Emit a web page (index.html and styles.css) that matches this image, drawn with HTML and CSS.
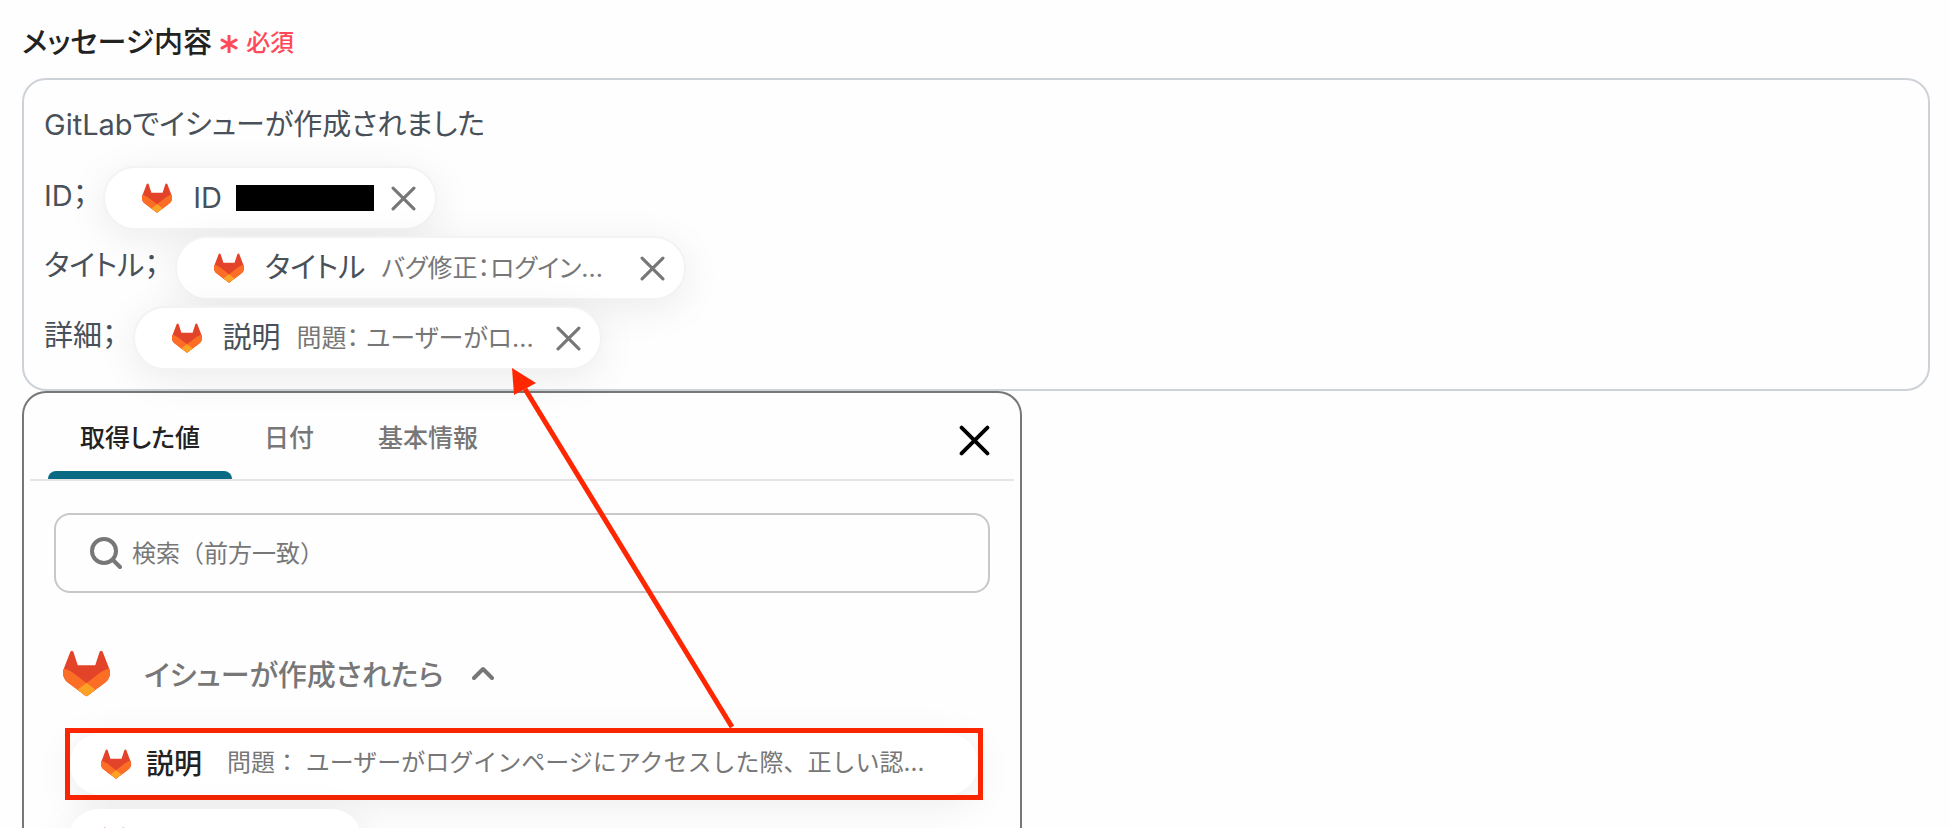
FILE: index.html
```html
<!DOCTYPE html>
<html lang="ja">
<head>
    <meta charset="UTF-8">
    <meta name="viewport" content="width=device-width, initial-scale=1.0">
    <title>メッセージ内容</title>
    <link rel="stylesheet" href="styles.css">
</head>
<body>
    <svg class="defs" aria-hidden="true">
        <clipPath id="foxShape">
            <path d="m23.6004 9.5927-.0337-.0862L20.3.9814a.851.851 0 0 0-.3362-.405.8748.8748 0 0 0-.9997.0539.8748.8748 0 0 0-.29.4399l-2.2055 6.748H7.5375l-2.2057-6.748a.8573.8573 0 0 0-.29-.4412.8748.8748 0 0 0-.9997-.0537.8585.8585 0 0 0-.3362.4049L.4332 9.5015l-.0325.0862a6.0657 6.0657 0 0 0 2.0119 7.0105l.0113.0087.03.0213 4.976 3.7264 2.462 1.8633 1.4995 1.1321a1.0085 1.0085 0 0 0 1.2197 0l1.4995-1.1321 2.4619-1.8633 5.006-3.7489.0125-.01a6.0682 6.0682 0 0 0 2.0094-7.003z"/>
        </clipPath>
        <symbol id="fox" viewBox="0 0 24 24">
            <g clip-path="url(#foxShape)">
                <rect width="24" height="24" fill="#e24329"/>
                <path d="M0 9.4c1.800.3 3.300 1 4.800 2L12 16.900l7.200-5.500c1.500-1 3-1.700 4.800-2V24H0z" fill="#fc6d26"/>
                <path d="M12 16.900 7.400 20.350 12 24l4.600-3.650z" fill="#fca326"/>
            </g>
        </symbol>
        <symbol id="cross" viewBox="0 0 24 24">
            <path d="M2 2l20 20M22 2 2 22" fill="none" stroke="currentColor" stroke-width="3" stroke-linecap="round"/>
        </symbol>
    </svg>

    <main class="page">
        <div class="label" id="messageLabel">
            メッセージ内容
            <span class="required">
                <svg class="asterisk" viewBox="0 0 18 18" aria-hidden="true"><path d="M9 1v16M2 5l14 8M16 5 2 13" stroke="currentColor" stroke-width="3" stroke-linecap="round"/></svg>
                必須
            </span>
        </div>

        <div class="editor" role="textbox" aria-multiline="true" aria-labelledby="messageLabel" contenteditable="true" spellcheck="false">
            <p class="line first">GitLabでイシューが作成されました</p>
            <div class="line">
                <span class="prefix">ID；</span>
                <span class="chip" contenteditable="false">
                    <svg class="fox"><use href="#fox"/></svg>
                    <span class="chip-name">ID</span>
                    <span class="redacted"></span>
                    <button type="button" class="remove" aria-label="削除"><svg><use href="#cross"/></svg></button>
                </span>
            </div>
            <div class="line">
                <span class="prefix">タイトル；</span>
                <span class="chip" contenteditable="false">
                    <svg class="fox"><use href="#fox"/></svg>
                    <span class="chip-name">タイトル</span>
                    <span class="chip-value">バグ修正：ログイン...</span>
                    <button type="button" class="remove" aria-label="削除"><svg><use href="#cross"/></svg></button>
                </span>
            </div>
            <div class="line">
                <span class="prefix">詳細；</span>
                <span class="chip" contenteditable="false">
                    <svg class="fox"><use href="#fox"/></svg>
                    <span class="chip-name">説明</span>
                    <span class="chip-value">問題： ユーザーがロ...</span>
                    <button type="button" class="remove" aria-label="削除"><svg><use href="#cross"/></svg></button>
                </span>
            </div>
        </div>

        <section class="panel">
            <div class="tabs" role="tablist">
                <button type="button" class="tab active" role="tab" aria-selected="true">取得した値</button>
                <button type="button" class="tab" role="tab" aria-selected="false">日付</button>
                <button type="button" class="tab" role="tab" aria-selected="false">基本情報</button>
                <button type="button" class="close" aria-label="閉じる"><svg><use href="#cross"/></svg></button>
            </div>

            <label class="search">
                <svg viewBox="0 0 32 32" aria-hidden="true"><circle cx="14" cy="14" r="12"/><path d="M23 23l7 7"/></svg>
                <input type="search" placeholder="検索（前方一致）" aria-label="検索（前方一致）">
            </label>

            <button type="button" class="group" aria-expanded="true">
                <svg class="fox-large"><use href="#fox"/></svg>
                <span>イシューが作成されたら</span>
                <svg class="chevron" viewBox="0 0 22 14" aria-hidden="true"><path d="M2 12l9-9 9 9"/></svg>
            </button>

            <div class="items">
                <div class="highlight">
                    <button type="button" class="item">
                        <svg class="fox"><use href="#fox"/></svg>
                        <span class="item-name">説明</span>
                        <span class="item-value">問題： ユーザーがログインページにアクセスした際、正しい認...</span>
                    </button>
                </div>
                <button type="button" class="item short">
                    <svg class="fox"><use href="#fox"/></svg>
                </button>
            </div>
        </section>

        <svg class="arrow" viewBox="0 0 230 362" aria-hidden="true">
            <path d="M15 21 222 359" stroke="#ff2600" stroke-width="5"/>
            <path d="M2 0l24 15L4 27z" fill="#ff2600"/>
        </svg>
    </main>
</body>
</html>
```
FILE: styles.css
```css
* { box-sizing: border-box; }
body { margin: 0; height: 100vh; overflow: hidden; background: #fefefe; color: #222; font-family: Inter, "Noto Sans CJK JP", sans-serif; font-size: 24px; }
button, input { margin: 0; padding: 0; border: none; background: none; font: inherit; color: inherit; }
button { cursor: pointer; }
svg { display: block; flex: none; }
.defs { position: absolute; width: 0; height: 0; }

.page { position: relative; height: 100%; padding: 0 20px 0 22px; overflow: hidden; }
.label { display: flex; align-items: center; gap: 8px; height: 78px; padding-top: 2px; font-size: 29px; font-weight: 500; font-feature-settings: "palt"; }
.required { display: flex; align-items: center; gap: 8px; color: #ff4858; font-size: 24px; }
.asterisk { width: 18px; height: 18px; margin-top: 8px; }

/* message editor */
.editor { padding: 20px 20px 16px; border: 2px solid #cdd2d8; border-radius: 24px; outline: none; color: #485059; font-size: 29px; font-feature-settings: "palt"; }
.line { display: flex; align-items: center; gap: 16px; height: 70px; margin: 0; line-height: 50px; white-space: nowrap; }
.first { height: 50px; margin-bottom: 13px; }
.prefix { padding-bottom: 4px; }
.chip { display: flex; align-items: center; height: 64px; padding: 0 19px 0 37px; background: #fff; border: 2px solid #f3f3f3; border-radius: 32px; box-shadow: 0 8px 40px rgba(0, 0, 0, 0.08); }
.fox { width: 30px; height: 30px; }
.chip-name { margin-left: 21px; }
.chip-value { width: 242px; margin-left: 16px; overflow: hidden; color: #777; font-size: 25px; }
.redacted { width: 138px; height: 26px; margin-left: 14px; background: #000; }
.remove { margin-left: 17px; color: #777; }
.remove svg { width: 25px; height: 25px; }

/* value picker */
.panel { max-width: 1000px; padding: 0 6px; border: 2px solid #777; border-bottom: none; border-radius: 24px 24px 0 0; background: #fefefe; }
.tabs { display: flex; height: 88px; padding: 0 24px 0 18px; border-bottom: 2px solid #e4e4e4; }
.tab { padding: 8px 32px 0; border-bottom: 8px solid transparent; color: #777; font-size: 25px; font-weight: 500; font-feature-settings: "palt"; }
.active { position: relative; color: #222; }
.active::after { content: ""; position: absolute; left: 0; right: 0; bottom: -8px; height: 8px; border-radius: 8px 8px 0 0; background: #0b6a83; }
.close { margin-left: auto; padding-top: 8px; color: #000; }
.close svg { width: 31px; height: 31px; }
.search { display: flex; align-items: center; gap: 10px; height: 80px; margin: 32px 24px 0; padding: 0 34px; border: 2px solid #c8c8c8; border-radius: 16px; }
.search svg { width: 32px; height: 32px; fill: none; stroke: #777; stroke-width: 4; stroke-linecap: round; }
.search input { flex: 1; height: 40px; outline: none; }
.search input::placeholder { color: #777; opacity: 1; }
.group { display: flex; align-items: center; margin: 55px 32px 0 33px; height: 50px; color: #777; font-size: 29px; font-weight: 500; font-feature-settings: "palt"; }
.fox-large { width: 47px; height: 47px; margin-right: 34px; }
.chevron { width: 22px; height: 14px; margin-left: 28px; fill: none; stroke: #777; stroke-width: 4; stroke-linecap: round; stroke-linejoin: round; }

.items { display: flex; flex-direction: column; align-items: flex-start; gap: 9px; margin: 30px 31px 0 35px; }
.highlight { width: 100%; height: 72px; border: 5px solid #ff2600; }
.item { display: flex; align-items: center; width: 100%; height: 62px; padding: 0 31px; background: #fff; border-radius: 31px; box-shadow: 0 8px 40px rgba(0, 0, 0, 0.08); line-height: 40px; white-space: nowrap; }
.short { width: 294px; height: 66px; margin-left: 3px; }
.item-name { margin-left: 15px; font-size: 28px; font-weight: 500; }
.item-value { margin-left: 25px; padding-bottom: 2px; color: #777; }

.arrow { position: absolute; left: 510px; top: 368px; width: 230px; height: 362px; pointer-events: none; }
```
